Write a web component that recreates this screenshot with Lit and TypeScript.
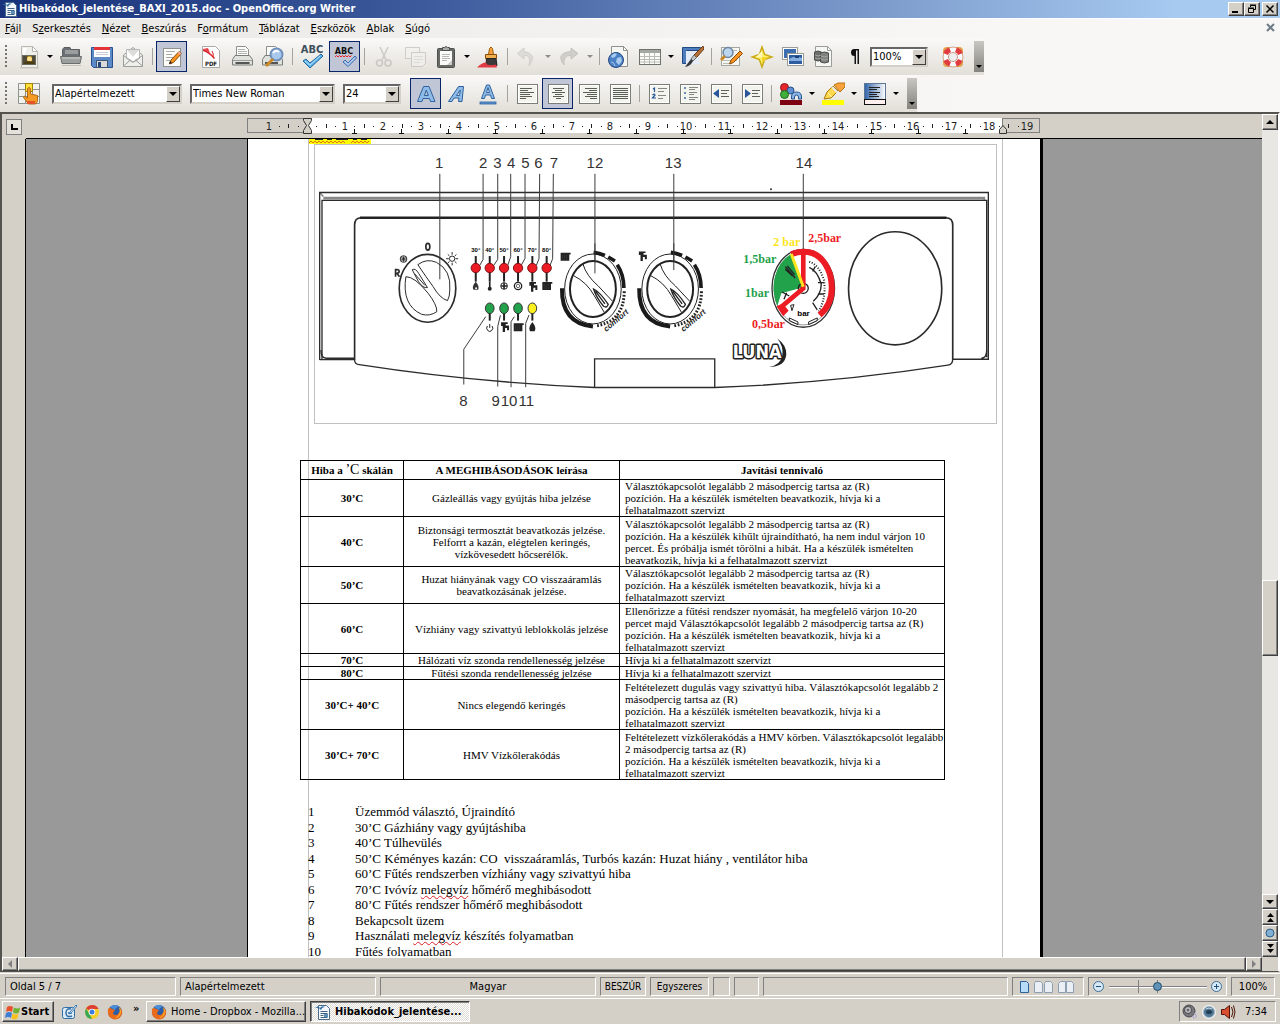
import { LitElement, html, svg, css, nothing } from "lit";
import { customElement, property } from "lit/decorators.js";
import { classMap } from "lit/directives/class-map.js";

const sheet = svg`<rect x="2.5" y="2.5" width="20" height="19" fill="#f3f4ee" stroke="#7b7e77"/><rect x="3.5" y="3.5" width="18" height="17" fill="none" stroke="#fff"/>`;

const lines = (rows: number[][], color = "#5a5e57") =>
  rows.map(([x1, x2, y]) => svg`<path d="M${x1} ${y}.5H${x2}" stroke=${color} fill="none"/>`);

const icons: Record<string, unknown> = {
  newDoc: svg`<path d="M4.500 1.500h11l5 5v16h-16z" fill="#eeeeea" stroke="#b9bab4"/><path d="M15.500 1.500v5h5z" fill="#fff" stroke="#b5b6b0"/><path d="M6 3h4l-3 8h-1z" fill="#fff"/><rect x="5.500" y="10.500" width="13" height="9" fill="#a07818" stroke="#6b695c"/><path d="M6 11h4v8H6zM15 11h3v8h-3z" fill="#4f4a38"/><circle cx="12.500" cy="14" r="2.500" fill="#ffe08a"/><path d="M7 18l4-2 7 1v2H7z" fill="#4a3c12"/><path d="M3 23h19" stroke="#c8c6bf"/>`,
  open: svg`<path d="M3.500 12V4.500L5 2.500h6l1 2h8.500V13" fill="#6c7076" stroke="#5a5d60"/><path d="M6 8h13M6 6h13" stroke="#c9ccc8"/><path d="M1.500 11.500h21l-1.500 7h-18z" fill="#9b9f9d" stroke="#6a6d6e"/><path d="M3 13h18" stroke="#d0d3d1"/><path d="M3 20h19v1H3z" fill="#c3c1bb"/>`,
  save: svg`<path d="M1.500 2.500h21v20h-19l-2-2z" fill="#5b8ac6" stroke="#2a4f8d"/><rect x="4" y="3" width="16" height="9" fill="#fff"/><rect x="4" y="2" width="16" height="3" fill="#e4343a"/><path d="M6 7.500h12M6 9.500h12" stroke="#c9ccd0"/><rect x="6.500" y="15.500" width="11" height="7" fill="#d9dbda" stroke="#3d5578"/><rect x="8" y="17" width="3" height="5" fill="#27467a"/>`,
  mail: svg`<path d="M2.500 10L12 2.500l9.500 7.500v11.500h-19z" fill="#efefec" stroke="#9d9f9c"/><path d="M5.500 4.500h13v9l-6.500 4-6.500-4z" fill="#fff" stroke="#b5b7b4"/><path d="M6 5h12l-6 7z" fill="#dcdddb"/><path d="M2.500 10.500L12 17l9.500-6.500M2.500 21l7-6M21.500 21l-7-6" fill="none" stroke="#9d9f9c"/>`,
  edit: svg`<rect x="3.500" y="3.500" width="17" height="18" fill="#fdfdfb" stroke="#8f918c"/>${lines([[6, 15, 6], [6, 12, 9], [6, 14, 12], [6, 10, 15]], "#a9aba6")}<path d="M19 6.500l2.500 2-8 9-4 1.500 1.500-4z" fill="#f7931e" stroke="#8a4b08"/><path d="M9 19l1-3 2 2z" fill="#222"/><path d="M19 6.500l2.500 2-1.500 1.500-2.500-2z" fill="#e9a8a0"/>`,
  pdf: svg`<path d="M3.500 1.500h13l4 4v17h-17z" fill="#fdfdfd" stroke="#aaaba8"/><path d="M4 4q6 2 12 9l-1 1Q10 8 4 6z" fill="#d8232a"/><path d="M4 4l5-1 2 5z" fill="#e64249"/><path d="M13 6q2 3 1 6" stroke="#d8232a" fill="none"/><text x="12" y="21" text-anchor="middle" font-size="6" font-weight="700" font-family="DejaVu Sans Condensed, sans-serif" fill="#222">PDF</text>`,
  print: svg`<path d="M6.500 11V1.500h9l3 3V11" fill="#fdfdfb" stroke="#8d8f8b"/>${lines([[8, 15, 4], [8, 17, 6], [8, 17, 8]], "#b3b5b1")}<path d="M5 10.500h14.500l3 4v5.500h-20v-5.500z" fill="#dfe1dd" stroke="#7a7c78"/><path d="M3 15.500h19" stroke="#9b9e99"/><path d="M5.500 18h14" stroke="#555" stroke-width="2"/>`,
  preview: svg`<path d="M5.500 12V1.500h9l3 3V12" fill="#fdfdfb" stroke="#8d8f8b"/><path d="M4 10.500h14.500l3 4v5.500h-20v-5.500z" fill="#dfe1dd" stroke="#7a7c78"/><path d="M4 18h13" stroke="#555" stroke-width="2"/><circle cx="15.500" cy="9.500" r="6" fill="#a8c8ec" stroke="#6f8fba" stroke-width="2"/><path d="M12 8q3-4 6-1" stroke="#fff" fill="none" stroke-width="2"/><path d="M12 14l-7 7" stroke="#c9892a" stroke-width="3"/>`,
  spell: svg`<text x="12" y="8" text-anchor="middle" font-size="11" font-weight="700" font-family="DejaVu Sans Condensed, sans-serif" fill="#3d4f5c">ABC</text><path d="M3 16l3-2 4 4L21 9l2 2-13 12z" fill="#5db2ea" stroke="#22689f"/><path d="M5 16l5 4L20 11" stroke="#b9e2fb" fill="none"/>`,
  autoSpell: svg`<text x="11" y="9" text-anchor="middle" font-size="9" font-weight="700" font-family="DejaVu Sans Condensed, sans-serif" fill="#111">ABC</text><path d="M2 12l1.500-1.500L5 12l1.500-1.500L8 12l1.500-1.500L11 12l1.500-1.500L14 12l1.500-1.500L17 12l1.500-1.500" stroke="#e22" fill="none"/><path d="M10 17l2-2 3 3 7-7 1.500 2L15 21.500z" fill="#a9c9ee" stroke="#3f69a8"/>`,
  cut: svg`<g opacity=".5" fill="none" stroke="#a9a8a4" stroke-width="1.500"><path d="M8 2l6 13M16 2l-6 13"/><ellipse cx="7.500" cy="18" rx="3" ry="3"/><ellipse cx="16" cy="18" rx="3" ry="3"/></g>`,
  copy: svg`<g opacity=".6" fill="#f2f1ee" stroke="#b7b6b1"><path d="M2.500 2.500h14v11h-14z"/><path d="M8.500 7.500h14v11l-3 3h-11z"/><path d="M11 11.500h9M11 14.500h9M11 17.500h6" stroke="#d2d1cc"/></g>`,
  paste: svg`<rect x="3.500" y="3.500" width="17" height="19" rx="1" fill="#686a66" stroke="#4e504d"/><rect x="6" y="6" width="12" height="14" fill="#fafaf8"/><path d="M8.500 5.500v-3h2q1.500-2 3 0h2v3z" fill="#a9aba6" stroke="#4e504d"/>${lines([[8, 16, 9], [8, 15, 11], [8, 16, 13], [8, 13, 15]], "#b5b7b2")}<path d="M13 20h5v-5z" fill="#c9cbc6"/>`,
  brush: svg`<path d="M12.500 9.500l1-6q1.500-3 3 0l1 6z" fill="#f5a13b" stroke="#9c5c0e"/><path d="M9.500 9.500h11v4h-11z" fill="#efb052" stroke="#8a4b08"/><path d="M10.500 13.500h9.500l1 7h-11z" fill="#3d3b3a" stroke="#222"/><path d="M1 22.500q5-5 9-5l1 2q5 1 9 0l1 3z" fill="#e03a42"/>`,
  undo: svg`<path d="M9 3L2.500 8.500 9 14v-3.500q8-1 5 10.500 9-12-5-14.500z" fill="#dedcd8" stroke="#d0cfca"/>`,
  redo: svg`<path d="M14 3l7 5.500-7 5.500v-3.500Q6 10 7 20-2 8 14 6.500z" fill="#cfceca" stroke="#c4c3be"/>`,
  globe: svg`<path d="M4.500 1.500h12l4 4v16h-16z" fill="#f6f6f3" stroke="#8f918c"/><path d="M16.500 1.500v4h4z" fill="#fff" stroke="#8f918c"/><circle cx="9" cy="15" r="7.500" fill="#4c80c4" stroke="#254a86"/><path d="M4 11q3-4 6-2l-2 3-3 1zM10 13l4-1 1 4-3 4-3-3z" fill="#a8cbee"/><path d="M4 17q3 0 4 4" stroke="#a8cbee" fill="none"/>`,
  table: svg`<rect x="1.500" y="4.500" width="21" height="15" fill="#fbfbf8" stroke="#6f726c"/><rect x="2" y="5" width="20" height="3" fill="#a4a8a2"/><path d="M2 11.500h20M2 14.500h20M2 17h20M6.500 8v11M11.500 8v11M16.500 8v11" stroke="#b9bbb6" fill="none"/>`,
  draw: svg`<path d="M2.500 2.500h18v3h-14v13h-4z" fill="#4d7dbd" stroke="#244a83"/><path d="M6 6h13v13H6z" fill="#e3ecf7"/><path d="M23 1l-9 9 2.500 2.500L24 4z" fill="#b4723a" stroke="#6e3c12"/><path d="M14 10l2.500 2.500L13 16l-2-2z" fill="#c5c8c6" stroke="#666"/><path d="M11 14l2 2q-2 5-8 6 3-4 6-8z" fill="#34383c"/>`,
  find: svg`<rect x="2.500" y="2.500" width="18" height="18" fill="#f5f5f2" stroke="#a4a69f"/>${lines([[4, 18, 5], [4, 18, 15], [4, 10, 18]], "#b9bbb5")}<circle cx="9" cy="7.500" r="5" fill="#bcd5ee" stroke="#6e87a5" stroke-width="1.500"/><path d="M6 11l-4 4" stroke="#c9892a" stroke-width="3"/><path d="M21 6l2.500 2.500-9 9-4 1.500 1.500-4z" fill="#f7931e" stroke="#8a4b08"/>`,
  nav: svg`<path d="M12 2l2.600 7.400L22 12l-7.400 2.600L12 22l-2.600-7.400L2 12l7.400-2.600z" fill="#fdf06a" stroke="#c9a813" stroke-width="1.500"/><path d="M12 6v6H6z" fill="#fff8b8"/><path d="M12 18v-6h6z" fill="#f4d42a"/>`,
  gallery: svg`<rect x="1.500" y="2.500" width="15" height="12" fill="#fff" stroke="#9a9c97"/><rect x="3" y="4" width="12" height="9" fill="#3c6db0"/><rect x="6.500" y="8.500" width="16" height="12" fill="#fff" stroke="#9a9c97"/><rect x="8" y="10" width="13" height="9" fill="#2d5c9f"/><path d="M8 14q6-4 13-1v3H8z" fill="#83aedd"/><path d="M14 11h4v2h-4z" fill="#1c3f75"/>`,
  sources: svg`<path d="M3.500 1.500h12l4 4v16h-16z" fill="#f6f6f3" stroke="#9a9c97"/><path d="M15.500 1.500v4h4z" fill="#fff" stroke="#9a9c97"/><path d="M2.500 7q3.500-2 7 0v8q-3.500 2-7 0z" fill="#6d6f6c" stroke="#4c4e4c"/><path d="M8.500 8q4-2 8 0v9q-4 2-8 0z" fill="#7f817e" stroke="#4c4e4c"/><path d="M3 10q3 2 6 0M3 13q3 2 6 0M9 11q3.500 2 7 0M9 14q3.500 2 7 0" stroke="#a5a7a4" fill="none"/>`,
  pilcrow: svg`<path d="M11 4h5v15h-1.500V5.500H13V19h-1.500v-8q-3.500 0-3.500-3.500T11 4z" fill="#111"/>`,
  help: svg`<rect x="2" y="2" width="20" height="20" rx="4" fill="#e2a24a"/><circle cx="12" cy="12" r="10" fill="#fbfbfb" stroke="#d9a790"/><g fill="none" stroke="#e23b3f" stroke-width="5"><path d="M4.600 9A8 8 0 0 1 9 4.600M15 4.600A8 8 0 0 1 19.400 9M19.400 15a8 8 0 0 1-4.400 4.400M9 19.400A8 8 0 0 1 4.600 15"/></g><circle cx="12" cy="12" r="4.500" fill="#efeeec" stroke="#c79a90"/>`,
  styles: svg`<g fill="#f1f1ee" stroke="#8f928c"><path d="M1.500 1.500h7v6h-7zM8.500 1.500h7v6h-7zM15.500 1.500h7v6h-7zM1.500 7.500h7v7h-7zM15.500 7.500h7v7h-7zM1.500 14.500h7v7h-7zM8.500 14.500h7v7h-7zM15.500 14.500h7v7h-7z"/></g><rect x="8.500" y="1.500" width="7" height="8" fill="#ffdf3a" stroke="#a48508"/><path d="M10.500 16V6.500q1.500-2 3 0V12l7 1.500v6l-2 2.500h-7l-5-6.500 1-1.500z" fill="#f59a23" stroke="#b06a16"/><path d="M10 19h8v3h-8z" fill="#e3532a"/>`,
  bold: svg`<path d="M3.500 19.500L9.500 4.500h5.500l6 15h-4.500l-1-3H9l-1 3zM10.300 13.500h4L12.300 8z" fill="#8fbbe6" fill-rule="evenodd" stroke="#2f62a0"/>`,
  italic: svg`<path d="M3.500 19.500L13.500 4.500h5l-1.500 15h-3.500l.5-3.500h-5l-2 3.500zM11.500 13.500h3l.8-5.500z" fill="#8fbbe6" fill-rule="evenodd" stroke="#2f62a0"/>`,
  underline: svg`<path d="M5.500 16.500l5-13.500h3l5 13.500h-3l-1-3.500h-5l-1 3.500zM10.500 10.500h3l-1.500-5z" fill="#8fbbe6" fill-rule="evenodd" stroke="#2f62a0"/><rect x="4" y="20" width="16" height="2" fill="#5c95d6" stroke="#2f62a0" stroke-width=".8"/>`,
  left: svg`${sheet}${lines([[5, 17, 6], [5, 13, 8], [5, 19, 10], [5, 15, 12], [5, 17, 14], [5, 11, 16]])}`,
  center: svg`${sheet}${lines([[7, 18, 6], [9, 16, 8], [6, 19, 10], [9, 16, 12], [7, 18, 14], [10, 15, 16]])}`,
  right: svg`${sheet}${lines([[8, 20, 6], [12, 20, 8], [6, 20, 10], [10, 20, 12], [8, 20, 14], [13, 20, 16]])}`,
  justify: svg`${sheet}${lines([[5, 20, 6], [5, 20, 8], [5, 20, 10], [5, 20, 12], [5, 20, 14], [5, 20, 16]])}`,
  numbers: svg`${sheet}<path d="M6 7l1.500-1V10M5.500 13q2-2 2.500 0l-2.500 3H9" stroke="#2a5799" fill="none" stroke-width="1.200"/>${lines([[11, 20, 6], [11, 17, 9], [11, 19, 13], [11, 16, 16]], "#858882")}`,
  bullets: svg`${sheet}<path d="M6 6h2M6 11h2M6 16h2" stroke="#6f8fba" stroke-width="2"/>${lines([[11, 20, 5], [11, 17, 7], [11, 19, 10], [11, 16, 12], [11, 20, 15], [11, 17, 17]], "#858882")}`,
  outdent: svg`${sheet}<path d="M10 7v9l-6-4.500z" fill="#2a5799"/>${lines([[12, 20, 8], [12, 18, 11], [12, 20, 14]], "#5d605b")}`,
  indent: svg`${sheet}<path d="M5 7v9l6-4.500z" fill="#2a5799"/>${lines([[12, 20, 8], [12, 18, 11], [12, 20, 14]], "#5d605b")}`,
  fontColor: svg`<circle cx="5.500" cy="5.500" r="4" fill="#e5262c" stroke="#8d1014"/><circle cx="11.500" cy="8.500" r="3.500" fill="#5f91d2" stroke="#254a86"/><circle cx="5.500" cy="12.500" r="4" fill="#3fae3b" stroke="#1c6a1a"/><path d="M12.500 17v-2q0-5 5-5t5 5v2h-3v-2q0-2-2-2t-2 2v2z" fill="#8db7e4" stroke="#215390"/><rect x="1" y="18" width="22" height="5" fill="#7c0010"/>`,
  highlight: svg`<path d="M3 17l3-7 6-6 5 5-7 7z" fill="#ffd94d" stroke="#a8790a"/><path d="M13 3l4-2h7v4l-5 5z" fill="#f5a33a" stroke="#b87018"/><path d="M11 5l6 6" stroke="#e9e9e9" stroke-width="2"/><path d="M7 11l4 4" stroke="#fff3a8"/><rect x="1" y="18" width="22" height="5" fill="#ff0"/>`,
  background: svg`<defs><linearGradient id="bg"><stop offset="0" stop-color="#2f62a8"/><stop offset="1" stop-color="#fff"/></linearGradient></defs><rect x="1.500" y="1.500" width="21" height="16" fill="url(#bg)" stroke="#5f7797"/>${lines([[6, 17, 5], [6, 14, 7], [6, 17, 10], [6, 14, 12], [6, 16, 14]], "#222")}<rect x="1.500" y="17.500" width="21" height="5" fill="#fff0f0" stroke="#111"/>`,
};

const small: Record<string, unknown> = {
  writer: svg`<path d="M3.500 1.500h8l3 3v11h-11z" fill="#f4f8fc" stroke="#4b6b8d"/><path d="M0 4q3-3 5 0 2-3 5-1-3 0-4 3Q4 3 0 4z" fill="#2d6a9e"/><path d="M5.500 7.500h7M5.500 9.500h7M5.500 11.500h3M5.500 13.500h7" stroke="#3e6384"/><rect x="9" y="10" width="4" height="3" fill="#5f8fb8"/>`,
  windows: svg`<path d="M2 3q3-2 6 0l-1 5q-3-2-6 0z" fill="#e8502a"/><path d="M9 3.500q3 2 6 0l-1 5q-3 2-6 0z" fill="#6fb12c"/><path d="M1 9q3-2 6 0l-1 5q-3-2-6 0z" fill="#3d7fd6"/><path d="M7.500 9.500q3 2 6 0l-1 5q-3 2-6 0z" fill="#f8c11c"/>`,
  desktop: svg`<rect x="1.500" y="3.500" width="12" height="11" rx="2" fill="#dceaf6" stroke="#2f6ea8"/><path d="M10 5q-5-1-5 4t6 3M7 9h4" stroke="#2f6ea8" fill="none" stroke-width="1.500"/><path d="M15 1l-6 7-1 2 2-1 6-7z" fill="#fff" stroke="#3778b2"/>`,
  chrome: svg`<circle cx="8" cy="8" r="7" fill="#f9cf27"/><path d="M8 8L2 4.500A7 7 0 0 1 14.500 5H8z" fill="#dd4032"/><path d="M2 4.500L6 11l2 4A7 7 0 0 1 2 4.500z" fill="#36a853"/><circle cx="8" cy="8" r="3.300" fill="#fff"/><circle cx="8" cy="8" r="2.500" fill="#3f7de0"/>`,
  firefox: svg`<circle cx="8" cy="8" r="7" fill="#2b5da8"/><path d="M3 3Q8-1 12 3q-3 0-4 3z" fill="#4b8fd6"/><path d="M1 5q2-2 4 0l3 1q-2 2-2 4 3 2 5 0 3-3 1-7 4 3 3 7-2 6-8 5.500Q0 14 1 5z" fill="#ea6a1c"/><path d="M12 3q3 3 1 8-2 3-5 3 7-3 4-11z" fill="#fbc02d"/>`,
  speaker: svg`<circle cx="7" cy="7" r="6" fill="#77777b" stroke="#4a4a4e"/><circle cx="6" cy="6" r="3.500" fill="#c6c6cc" stroke="#444"/><circle cx="6" cy="6" r="1.500" fill="#666"/><path d="M12 9q3 1 2 5M10 12q2 0 2 3" stroke="#a59dda" fill="none"/>`,
  orb: svg`<circle cx="8" cy="8" r="7" fill="#f1f3f5"/><circle cx="8" cy="8" r="5.500" fill="#517792" stroke="#9fb4c2"/><ellipse cx="8" cy="8" rx="3" ry="2" fill="#223f57"/><path d="M5 5q3-2 6 0" stroke="#c8dae6" fill="none"/>`,
  sound: svg`<path d="M1.500 5.500h3l5-4v13l-5-4h-3z" fill="#d8502f" stroke="#4e1408"/><path d="M11.500 3q3 5 0 10M13.500 1.500q3 6.500 0 13" stroke="#4e1408" fill="none"/>`,
};

const knob2 = svg`
  <ellipse cx="880" cy="477" rx="85" ry="105" fill="none" stroke="#222" stroke-width="3"/>
  <ellipse cx="880" cy="477" rx="69" ry="84" fill="#fff" stroke="#222" stroke-width="6"/>
  <path d="M787 475q-2 105 93 115" fill="none" stroke="#1a1a1a" stroke-width="12"/>
  <path d="M882 367q18 2 34 9M926 381l20 12M953 404q20 30 20 70" fill="none" stroke="#1a1a1a" stroke-width="11"/>
  <path d="M974 484q0 90-85 104" fill="none" stroke="#222" stroke-width="9" stroke-dasharray="5 5"/>
  <path d="M822 437q40 20 62 60l30 50M850 402q10 35 46 66l42 45" fill="none" stroke="#222" stroke-width="3"/>
  <path d="M882 477q18 8 44 46-4 12-14 6-22-26-30-52zM888 484l28 38" fill="none" stroke="#222" stroke-width="4"/>
  <text x="920" y="606" class="comfort" transform="rotate(-40 920 606)">comfort</text>`;

const tap = (x: number, y: number) => svg`<path d="M${x} ${y}h20v5h-6v5h10v14h-6v-7h-6v12h-7v-18h-5z" fill="#222"/>`;
const radiator = (x: number, y: number) => svg`<path d="M${x} ${y}h30v5h-4v19h-26z" fill="#222"/><path d="M${x + 6} ${y + 5}v16m6-16v16m6-16v16" stroke="#555" stroke-width="1"/>`;

const lamps = [528, 570, 613, 655, 698, 741];

const panelDrawing = svg`
  <g fill="none" stroke="#2b2b2b" stroke-width="3">
    <path d="M70 202H2056v8M59 187l11 12M70 206H2056" stroke="#888" stroke-width="5"/>
    <path d="M59 690V187H2068V690M66 690V211H2063V682" stroke-width="4"/>
    <path d="M63 660q0 24 16 25H164M59 689H164M1962 688H2068M2063 660q0 24-16 25" stroke-width="4"/>
    <path d="M164 690V285q0-22 20-22H1940q21 0 21 22V690" stroke-width="5"/>
    <path d="M180 263H1942" stroke-width="8" stroke="#222"/>
    <path d="M164 690q0 13 14 14Q520 757 885 773H1246Q1600 760 1946 706q15-2 15-18" stroke-width="4"/>
    <path d="M885 773V687H1246V773" stroke-width="4"/>
    <ellipse cx="1788" cy="475" rx="140" ry="170" stroke-width="5"/>
    <ellipse cx="383" cy="475" rx="85" ry="102" stroke-width="5"/>
    <path d="M354 404Q380 384 410 397 455 420 450 480 450 500 443 512 420 505 400 470 378 440 354 404z"/>
    <path d="M318 440Q345 440 385 490 412 525 411 545 390 560 365 553 305 525 318 440z"/>
    <path d="M337 419q10-6 20 12l26 42q-14 2-27-18zM345 432l30 34"/>
    <ellipse cx="384" cy="350" rx="6" ry="10" stroke-width="5"/>
    <circle cx="457" cy="386" r="8"/><path d="M457 366v8M457 398v8M439 386h8M467 386h8M444 373l5 5M465 394l5 5M470 373l-5 5M444 399l5-5"/>
    <circle cx="311" cy="387" r="10"/><path d="M303 387h16M311 379v16M304 380l14 14M318 380l-14 14"/>
    <path d="M287 440v-21h5q6 1 6 5 0 6-7 6l8 10" stroke-width="5"/>
  </g>
  <g fill="none" stroke="#3a3a3a" stroke-width="3">
    <path d="M420 131V448M550 131V388l-10 18M594 131V388l-12 18M633 131V380l-9 26M676 131V385l-11 20M720 131l-2 255-8 20M761 131l-2 255-8 20M886 131V430M1123 131V420M1512 131V360"/>
    <path d="M492 764V658l66-98M594 770V590l8-34M634 772V575l10-15M678 772V580l10-25"/>
  </g>
  ${lamps.map((x, i) => svg`<path d="M${x} 378V455" stroke="#222" stroke-width="6"/><circle cx=${x} cy="414" r="14" fill="#ed1c24" stroke="#7c1015" stroke-width="3"/><text x=${x} y="367" class="tick">${3 + i}0°</text>`)}
  ${[[570, "#22a24a"], [613, "#22a24a"], [655, "#22a24a"], [698, "#fdf01e"]].map(([x, c]) => svg`<path d="M${x} 535V572" stroke="#222" stroke-width="6"/><ellipse cx=${x} cy="535" rx="13" ry="16" fill=${c} stroke="#333" stroke-width="3"/>`)}
  <path d="M528 455q12 14 7 24h-14q-6-10 7-24z" fill="#333"/><circle cx="529" cy="475" r="3" fill="#fff"/>
  <path d="M570 455v20" stroke="#222" stroke-width="5"/><circle cx="570" cy="476" r="6" fill="#222"/>
  <circle cx="613" cy="468" r="10" fill="none" stroke="#222" stroke-width="3"/><path d="M604 468h18M613 459v18" stroke="#222" stroke-width="5"/>
  <circle cx="655" cy="468" r="11" fill="none" stroke="#222" stroke-width="4"/><circle cx="655" cy="468" r="5" fill="none" stroke="#222" stroke-width="2"/>
  ${tap(689, 456)}${radiator(728, 456)}${tap(604, 577)}${radiator(642, 580)}${radiator(783, 368)}${tap(1018, 364)}
  <path d="M563 588a9 10 0 1 0 14 0M570 582v12" stroke="#222" stroke-width="3" fill="none"/>
  <path d="M698 576q14 18 7 28h-14q-7-10 7-28z" fill="#222"/>
  ${knob2}<g transform="translate(232 0)">${knob2}</g>
  <path d="M886 340V430M1123 340V420" stroke="#3a3a3a" stroke-width="3"/>
  <ellipse cx="1512" cy="475" rx="94" ry="117" fill="#fff" stroke="#333" stroke-width="4"/>
  <ellipse cx="1512" cy="475" rx="88" ry="110" fill="none" stroke="#666" stroke-width="2"/>
  <path d="M1512 472L1475 372A90 112 0 0 0 1434 528L1446 490z" fill="#22a24a"/>
  <g fill="none" stroke="#222" stroke-width="4"><path d="M1530 412q24 10 36 50 0 30-24 52M1540 424l8-14M1556 458h18M1556 492h18M1540 518l14 22M1448 486l22 12M1462 488l-8 20"/><path d="M1530 395q30 10 44 55 8 54-16 94" stroke-width="6" stroke-dasharray="3 5"/><path d="M1458 410l30 34M1464 408l22 26M1458 418l22 20"/><circle cx="1512" cy="475" r="15"/><path d="M1470 564l26 12v8l-26-12zM1554 564l-26 12v8l26-12z" stroke-width="3"/><path d="M1474 526l4 16 6-18z" stroke-width="3"/></g>
  <path d="M1476 372q85-28 116 60 20 80-31 123" fill="none" stroke="#ed1c24" stroke-width="18"/>
  <path d="M1512 362V475L1442 534" fill="none" stroke="#ed1c24" stroke-width="14"/>
  <path d="M1436 530l16 24 12-12-14-18z" fill="#ed1c24" stroke="#ed1c24" stroke-width="6"/>
  <path d="M1476 372L1512 470" stroke="#fbe51c" stroke-width="9"/>
  <g class="num">
    ${([[418, 115, "1"], [550, 115, "2"], [593, 115, "3"], [634, 115, "4"], [677, 115, "5"], [716, 115, "6"], [763, 115, "7"], [886, 115, "12"], [1121, 115, "13"], [1514, 115, "14"], [491, 829, "8"], [588, 829, "9"], [628, 829, "10"], [680, 829, "11"]] as [number, number, string][]).map(([x, y, t]) => svg`<text x=${x} y=${y}>${t}</text>`)}
  </g>
  <g class="bar">
    <text x="1422" y="348" fill="#fbe51c">2 bar</text><text x="1527" y="336" fill="#ed1c24">2,5bar</text>
    <text x="1332" y="398" fill="#22a24a">1,5bar</text><text x="1337" y="502" fill="#22a24a">1bar</text>
    <text x="1358" y="594" fill="#ed1c24">0,5bar</text>
  </g>
  <text x="1494" y="559" class="unit">bar</text>
  <path d="M1434 626q28 20 27 48-4 38-52 37 34-4 40-34 4-28-15-51z" fill="#222"/>
  <text x="1300" y="684" class="luna">LUNA</text>
  <circle cx="1415" cy="177" r="3" fill="#333"/>`;

const CM = 37.9;
const rulerDrawing = () => {
  const marks = [];
  for (let n = -1; n <= 19; n++) {
    const x = Math.round(60 + n * CM);
    if (n !== 0) marks.push(svg`<text x=${x} y="12">${Math.abs(n)}</text>`);
    for (const q of [0.25, 0.5, 0.75]) {
      const px = Math.round(60 + (n + q) * CM);
      if (px < 790 && px > 2) marks.push(q === 0.5 ? svg`<rect x=${px} y="6" width="1" height="4"/>` : svg`<rect x=${px} y="8" width="1" height="1"/>`);
    }
  }
  const tabs = [];
  for (let x = 107; x < 750; x += 47) tabs.push(svg`<path d="M${x - 2} 15.500h5M${x}.500 11v4" stroke="#111" fill="none"/>`);
  return svg`
    <rect x="0.500" y=".500" width="59" height="14" fill="#d4d0c8" stroke="#808080"/>
    <rect x="60" y="0" width="696" height="15" fill="#fff"/>
    <rect x="755.500" y=".500" width="37" height="14" fill="#d4d0c8" stroke="#808080"/>
    <g class="scale">${marks}</g>${tabs}
    <path d="M56.500 .500h8v2l-3 5 3 5v3h-8v-3l3-5-3-5z" fill="#d4d0c8" stroke="#333"/>
    <path d="M752.500 15.500v-4l3.500-4 3.500 4v4z" fill="#d4d0c8" stroke="#333"/>`;
};

const R = "pozíción. Ha a készülék ismételten beavatkozik, hívja ki a";
const S = "felhatalmazott szervizt";
const V = "Választókapcsolót legalább 2 másodpercig tartsa az (R)";

const faults: { code: string; cause: string[]; fix: string[] }[] = [
  { code: "30’C", cause: ["Gázleállás vagy gyújtás hiba jelzése"], fix: [V, R, S] },
  { code: "40’C", cause: ["Biztonsági termosztát beavatkozás jelzése.", "Felforrt a kazán, elégtelen keringés,", "vízkövesedett hőcserélők."], fix: [V, "pozíción. Ha a készülék kihűlt újraindítható, ha nem indul várjon 10", "percet. És próbálja ismét törölni a hibát. Ha a készülék ismételten", "beavatkozik, hívja ki a felhatalmazott szervizt"] },
  { code: "50’C", cause: ["Huzat hiányának vagy CO visszaáramlás", "beavatkozásának jelzése."], fix: [V, R, S] },
  { code: "60’C", cause: ["Vízhiány vagy szivattyú leblokkolás jelzése"], fix: ["Ellenőrizze a fűtési rendszer nyomását, ha megfelelő várjon 10-20", "percet majd Választókapcsolót legalább 2 másodpercig tartsa az (R)", R, S] },
  { code: "70’C", cause: ["Hálózati víz szonda rendellenesség jelzése"], fix: ["Hívja ki a felhatalmazott szervizt"] },
  { code: "80’C", cause: ["Fűtési szonda rendellenesség jelzése"], fix: ["Hívja ki a felhatalmazott szervizt"] },
  { code: "30’C+ 40’C", cause: ["Nincs elegendő keringés"], fix: ["Feltételezett dugulás vagy szivattyú hiba. Választókapcsolót legalább 2", "másodpercig tartsa az (R)", R, S] },
  { code: "30’C+ 70’C", cause: ["HMV Vízkőlerakódás"], fix: ["Feltételezett vízkőlerakódás a HMV körben. Választókapcsolót legalább", "2 másodpercig tartsa az (R)", R, S] },
];

const bad = (t: string) => html`<span class="bad">${t}</span>`;
const legend: unknown[] = [
  "Üzemmód választó, Újraindító",
  "30’C Gázhiány vagy gyújtáshiba",
  "40’C Túlhevülés",
  "50’C Kéményes kazán: CO  visszaáramlás, Turbós kazán: Huzat hiány , ventilátor hiba",
  "60’C Fűtés rendszerben vízhiány vagy szivattyú hiba",
  html`70’C Ivóvíz ${bad("melegvíz")} hőmérő meghibásodott`,
  "80’C Fűtés rendszer hőmérő meghibásodott",
  "Bekapcsolt üzem",
  html`Használati ${bad("melegvíz")} készítés folyamatban`,
  "Fűtés folyamatban",
];

const joined = (parts: string[]) => parts.map((p, i) => (i ? html`<br />${p}` : p));

@customElement("doc-page")
class DocPage extends LitElement {
  static styles = css`
    :host { display: block; flex: none; min-height: 100%; box-sizing: border-box; width: 796px; background: #fff; border-left: 1px solid #000; border-right: 3px solid #000; font-family: "Liberation Serif", "Times New Roman", serif; color: #000; }
    .margins { box-sizing: border-box; margin: 0 37px 0 60px; border-left: 1px solid #c0c0c0; border-right: 1px solid #c0c0c0; }
    .clipped { display: block; width: 62px; height: 5px; background: #ff0; }
    .figure { display: block; box-sizing: border-box; margin: 0 5px 36px; border: 1px solid #c0c0c0; }
    .figure svg { display: block; width: 100%; height: 278px; }
    .num text { font: 45px "Liberation Sans Narrow", "Liberation Sans", sans-serif; text-anchor: middle; fill: #333; }
    .bar text { font: bold 36px "Liberation Serif", serif; }
    .tick { font: bold 18px "Liberation Sans", sans-serif; text-anchor: middle; }
    .comfort { font: italic bold 24px "Liberation Sans", sans-serif; fill: #222; }
    .unit { font: bold 24px "Liberation Sans", sans-serif; }
    .luna { font: bold 54px "DejaVu Sans Condensed", sans-serif; fill: #fff; stroke: #222; stroke-width: 9; stroke-linejoin: round; paint-order: stroke; }
    table { border-collapse: collapse; table-layout: fixed; width: 645px; margin-left: -9px; font-size: 11px; line-height: 12px; white-space: nowrap; }
    th, td { border: 1px solid #000; padding: 0 5px; text-align: center; vertical-align: middle; }
    th { font-weight: bold; }
    thead tr { height: 19px; }
    thead th { padding: 0; line-height: 18px; }
    .deg { font-size: 14px; font-weight: normal; }
    .fix { text-align: left; }
    .tall { height: 50px; }
    .c1 { width: 103px; }
    .c2 { width: 216px; }
    ol { list-style: none; margin: 24px 0 0; padding: 0; display: grid; grid-auto-rows: 1fr; height: 155px; font-size: 13px; line-height: 15px; }
    li { display: grid; grid-template-columns: 47px 1fr; margin-left: -1px; white-space: pre; }
    .bad { text-decoration: underline wavy #d8232a 1px; text-underline-offset: 1px; text-decoration-skip-ink: none; }
  `;
  render() {
    return html`<div class="margins">
      <svg class="clipped" viewBox="0 0 62 5" aria-hidden="true"><path d="M6 .5h8M18 .5h5M27 .5h12M44 .5h4M52 .5h6" stroke="#222" /><path d="M0 4l2-2 2 2 2-2 2 2 2-2 2 2 2-2 2 2 2-2 2 2 2-2 2 2 2-2 2 2 2-2 2 2 2-2 2 2M42 4l2-2 2 2 2-2 2 2 2-2 2 2 2-2 2 2 2-2" fill="none" stroke="#e0701a" /></svg>
      <div class="figure"><svg viewBox="45 45 2046 834" role="img" aria-label="LUNA">${panelDrawing}</svg></div>
      <table>
        <colgroup><col class="c1" /><col class="c2" /><col /></colgroup>
        <thead><tr><th scope="col">Hiba a <span class="deg">’C</span> skálán</th><th scope="col">A MEGHIBÁSODÁSOK leírása</th><th scope="col">Javítási tennivaló</th></tr></thead>
        <tbody>${faults.map((f) => html`<tr class=${classMap({ tall: f.fix.length === 4 })}><th scope="row">${f.code}</th><td>${joined(f.cause)}</td><td class="fix">${joined(f.fix)}</td></tr>`)}</tbody>
      </table>
      <ol>${legend.map((t, i) => html`<li><span>${i + 1}</span><span>${t}</span></li>`)}</ol>
    </div>`;
  }
}

@customElement("tool-button")
class ToolButton extends LitElement {
  @property() icon = "";
  @property() label = "";
  @property({ type: Boolean }) pressed = false;
  static styles = css`
    :host { display: block; flex: none; }
    button { display: grid; place-items: center; width: 31px; height: 31px; padding: 0; border: 1px solid transparent; background: none; }
    .on { background: #c1c6d6; border-color: #0a246a; }
    svg { display: block; width: 24px; height: 24px; }
  `;
  render() {
    return html`<button class=${classMap({ on: this.pressed })} aria-label=${this.label} aria-pressed=${this.pressed ? "true" : "false"}><svg viewBox="0 0 24 24">${icons[this.icon]}</svg></button>`;
  }
}

const tool = (icon: string, label: string, pressed = false) => html`<tool-button icon=${icon} label=${label} ?pressed=${pressed}></tool-button>`;
const drop = (label: string, dim = false) => html`<button class="drop ${dim ? "dim" : ""}" aria-label=${label}></button>`;
const sep = html`<i class="sep"></i>`;
const combo = (label: string, cls: string, value: string) => html`<label class="combo ${cls}"><select aria-label=${label}><option>${value}</option></select><span class="arrow"></span></label>`;
const glyph = (name: string) => html`<svg class="glyph" viewBox="0 0 16 16" aria-hidden="true">${small[name]}</svg>`;

@customElement("app-root")
class AppRoot extends LitElement {
  static styles = css`
    :host { display: flex; flex-direction: column; height: 100vh; overflow: hidden; background: #d4d0c8; color: #000; font: 11px/14px "DejaVu Sans Condensed", Tahoma, sans-serif; }
    button, select { font: inherit; color: inherit; }
    button { margin: 0; }
    .glyph { display: block; flex: none; width: 16px; height: 16px; }
    .raised { box-sizing: border-box; background: #d4d0c8; border: 1px solid; border-color: #fff #404040 #404040 #fff; box-shadow: inset -1px -1px #808080; padding: 0; display: grid; place-items: center; }
    .title { display: flex; align-items: center; height: 18px; padding: 0 2px; background: linear-gradient(90deg, #17317a, #3c5a9c 33%, #7896c8 66%, #a6caf0 92%); color: #fff; }
    .title h1 { flex: 1; margin: 0 0 0 1px; font-size: 11px; line-height: 18px; font-weight: bold; white-space: nowrap; }
    .title .raised { width: 16px; height: 14px; color: #000; }
    .title .close { margin-left: 2px; }
    .chrome { background: linear-gradient(90deg, #eae8e4, #f3f2f0 50%, #f8f7f6 80%); border-top: 1px solid #fff; }
    .menu { display: flex; align-items: center; height: 19px; padding: 0 4px; gap: 9px; }
    .menu button { border: 0; background: none; padding: 0 1px; line-height: 16px; }
    .menu .shut { margin-left: auto; padding: 0 1px; }
    .bar { display: flex; align-items: center; width: max-content; height: 37px; background: linear-gradient(#faf9f8, #e2dfd8); box-sizing: border-box; }
    .grip { width: 2px; height: 24px; margin: 0 6px 0 5px; background: repeating-linear-gradient(#77756f 0 2px, transparent 2px 4px); }
    .sep { flex: none; width: 1px; height: 17px; margin: 0 3px 0 4px; background: #a5a39d; }
    .gap2 { width: 2px; } .gap6 { width: 6px; } .gap8 { width: 8px; } .gap9 { width: 9px; }
    .drop { width: 11px; height: 31px; padding: 0; border: 0; background: none; display: grid; place-items: center; }
    .drop::before, .arrow::before { content: ""; border: 3px solid transparent; border-top-color: #000; border-bottom: 0; }
    .dim::before { border-top-color: #8e8d89; }
    .combo { box-sizing: border-box; display: flex; height: 20px; background: #fff; border: 2px solid; border-color: #666 #d4d0c8 #d4d0c8 #666; }
    .combo select { flex: 1; min-width: 0; border: 0; padding: 0 0 0 1px; background: none; appearance: none; outline: 0; }
    .arrow { width: 14px; box-sizing: border-box; display: grid; place-items: center; background: #d4d0c8; border: 1px solid; border-color: #fff #404040 #404040 #fff; pointer-events: none; }
    .arrow::before { border-width: 4px 4px 0; }
    .w57 { width: 58px; } .w130 { width: 130px; } .w145 { width: 145px; }
    .more { width: 10px; height: 31px; padding: 0 0 4px; border: 0; background: linear-gradient(#c9c7c2, #85837e); display: flex; align-items: flex-end; justify-content: center; }
    .more::before { content: ""; border: 3px solid transparent; border-top-color: #000; border-bottom: 0; }
    .work { flex: 1; min-height: 0; display: grid; grid-template-columns: 24px 1fr 16px; grid-template-rows: 25px 1fr 14px; border: 2px solid; border-color: #55534e #fff #55534e #55534e; border-bottom-width: 1px; }
    .corner { display: grid; place-items: center; }
    .corner svg { width: 16px; height: 16px; }
    .ruler { display: flex; justify-content: center; align-items: center; padding-right: 2px; border-bottom: 1px solid #000; }
    .ruler svg { flex: none; width: 793px; height: 17px; }
    .scale { fill: #222; text-anchor: middle; font: 11px "DejaVu Sans Condensed", sans-serif; }
    .vruler { border-right: 1px solid #000; }
    .canvas { min-height: 0; overflow: hidden; display: flex; justify-content: center; align-items: flex-start; padding-left: 2px; background: #999; }
    .vscroll { grid-column: 3; grid-row: 1 / 3; display: grid; grid-template-rows: 16px 450fr 76px 238fr 15px 16px 16px 16px; background: #e9e7e3; min-height: 0; }
    .hscroll { grid-column: 1 / 3; display: grid; grid-template-columns: 16px 1fr 16px; }
    .status { display: flex; gap: 4px; padding: 3px 5px 2px; border-top: 1px solid #fff; margin-top: 1px; }
    .cell { box-sizing: border-box; height: 19px; border: 1px solid; border-color: #808080 #fff #fff #808080; padding: 0 4px; line-height: 18px; white-space: nowrap; text-align: center; }
    .s1 { width: 171px; text-align: left; } .s2 { width: 196px; text-align: left; } .s3 { width: 216px; } .s4 { width: 46px; font-size: 10px; padding: 0; } .s5 { width: 59px; font-size: 10px; padding: 0; } .s6 { width: 17px; } .s7 { width: 25px; } .s8 { flex: 1; }
    .s9 { width: 72px; display: flex; align-items: center; justify-content: center; }
    .s9 svg { width: 60px; height: 14px; }
    .s10 { width: 139px; display: flex; align-items: center; justify-content: space-between; }
    .s11 { width: 44px; padding: 0; }
    .round { width: 11px; height: 11px; padding: 0; border: 0; background: none; display: block; }
    .round svg { display: block; width: 11px; height: 11px; }
    .zoom { appearance: none; width: 98px; height: 13px; margin: 0; background: linear-gradient(#808080, #808080) 29px 0 / 1px 13px no-repeat, linear-gradient(#808080, #808080) 50% 0 / 1px 13px no-repeat, linear-gradient(#808080 1px, #fff 1px) 0 6px / 100% 2px no-repeat; }
    .zoom::-webkit-slider-thumb { appearance: none; width: 9px; height: 9px; border-radius: 50%; border: 1px solid #234a68; background: #5f93b8; }
    .task { display: flex; align-items: center; height: 25px; padding: 0 4px 0 2px; border-top: 1px solid #fff; }
    .task .raised { display: flex; align-items: center; height: 21px; gap: 4px; white-space: nowrap; }
    .task .start { width: 52px; padding: 0 2px; gap: 0; }
    .start, .current { font-weight: bold; }
    .quick { display: flex; align-items: center; gap: 7px; margin: 0 10px 0 7px; }
    .quick a { display: block; }
    .chev { width: 12px; font-weight: bold; padding: 0; border: 0; background: none; margin: 0 1px 6px 0; text-align: left; }
    .task .tab { width: 160px; padding: 0 4px; margin-right: 4px; }
    .task .current { border-color: #404040 #fff #fff #404040; box-shadow: inset 1px 1px #808080; background: repeating-conic-gradient(#fff 0 25%, #dedbd5 0 50%) 0 0 / 2px 2px; }
    .tray { display: flex; align-items: center; gap: 3px; margin-left: auto; box-sizing: border-box; width: 97px; height: 21px; padding: 0 2px; border: 1px solid; border-color: #808080 #fff #fff #808080; }
    .tray time { margin: 0 auto; }
  `;

  private menuItem(before: string, key: string, after: string) {
    return html`<button>${before}<u>${key}</u>${after}</button>`;
  }

  private tri(d: string, color = "#000") {
    return html`<svg width="10" height="10" viewBox="0 0 10 10" aria-hidden="true"><path d=${d} fill=${color} /></svg>`;
  }

  private round(label: string, plus: boolean) {
    return html`<button class="round" aria-label=${label}><svg viewBox="0 0 11 11"><circle cx="5.500" cy="5.500" r="5" fill="#d7e8f5" stroke="#3f6f98" /><path d="M3 5.500h5" stroke="#1f4f7d" />${plus ? svg`<path d="M5.500 3v5" stroke="#1f4f7d"/>` : nothing}</svg></button>`;
  }

  render() {
    return html`
      <header class="title">
        ${glyph("writer")}
        <h1>Hibakódok_jelentése_BAXI_2015.doc - OpenOffice.org Writer</h1>
        <button class="raised" aria-label="Kis méret"><svg width="10" height="10"><path d="M1 8h6" stroke="#000" stroke-width="2" /></svg></button>
        <button class="raised" aria-label="Előző méret"><svg width="10" height="10"><path d="M3.500 3V1.500h5v4H7M3 1h6M1.500 4.500h5v4h-5zM1 4h6" fill="none" stroke="#000" /></svg></button>
        <button class="raised close" aria-label="Bezárás"><svg width="10" height="10"><path d="M1.500 1.500l7 7M8.500 1.500l-7 7" stroke="#000" stroke-width="1.500" /></svg></button>
      </header>
      <div class="chrome">
        <nav class="menu">
          ${this.menuItem("", "F", "ájl")}${this.menuItem("S", "z", "erkesztés")}${this.menuItem("", "N", "ézet")}${this.menuItem("", "B", "eszúrás")}${this.menuItem("F", "o", "rmátum")}${this.menuItem("", "T", "áblázat")}${this.menuItem("", "E", "szközök")}${this.menuItem("", "A", "blak")}${this.menuItem("", "S", "úgó")}
          <button class="shut" aria-label="Dokumentum bezárása"><svg width="9" height="9"><path d="M1 1l7 7M8 1L1 8" stroke="#6e7d88" stroke-width="2" /></svg></button>
        </nav>
        <div class="bar" role="toolbar">
          <i class="grip"></i>${tool("newDoc", "Új")}${drop("Új típus")}${tool("open", "Megnyitás")}${tool("save", "Mentés")}${tool("mail", "Küldés")}${sep}${tool("edit", "Szerkesztés", true)}<i class="gap8"></i>${tool("pdf", "PDF")}${tool("print", "Nyomtatás")}${tool("preview", "Nyomtatási kép")}${sep}${tool("spell", "Helyesírás")}<i class="gap2"></i>${tool("autoSpell", "Automatikus ellenőrzés", true)}${sep}${tool("cut", "Kivágás")}${tool("copy", "Másolás")}${tool("paste", "Beillesztés")}${drop("Beillesztés módja")}${tool("brush", "Formátumecset")}${sep}${tool("undo", "Visszavonás")}${drop("Visszavonások", true)}${tool("redo", "Ismét")}${drop("Ismétlések", true)}${sep}${tool("globe", "Hiperhivatkozás")}${tool("table", "Táblázat")}${drop("Táblázat mérete")}${tool("draw", "Rajz")}${sep}${tool("find", "Keresés")}${tool("nav", "Navigátor")}${tool("gallery", "Képtár")}${tool("sources", "Adatforrások")}${tool("pilcrow", "Nem nyomtatható karakterek")}${combo("Nagyítás", "w57", "100%")}<i class="gap9"></i>${tool("help", "Súgó")}<i class="gap6"></i><button class="more" aria-label="Továbbiak"></button>
        </div>
        <div class="bar" role="toolbar">
          <i class="grip"></i>${tool("styles", "Stílusok")}<i class="gap8"></i>${combo("Stílus", "w130", "Alapértelmezett")}<i class="gap8"></i>${combo("Betűtípus", "w145", "Times New Roman")}<i class="gap8"></i>${combo("Betűméret", "w57", "24")}<i class="gap9"></i>${tool("bold", "Félkövér", true)}${tool("italic", "Dőlt")}${tool("underline", "Aláhúzott")}${sep}${tool("left", "Balra")}${tool("center", "Középre", true)}${tool("right", "Jobbra")}${tool("justify", "Sorkizárt")}${sep}${tool("numbers", "Számozás")}${tool("bullets", "Felsorolás")}${tool("outdent", "Behúzás csökkentése")}${tool("indent", "Behúzás növelése")}${sep}${tool("fontColor", "Betűszín")}${drop("Betűszínek")}${tool("highlight", "Kiemelés")}${drop("Kiemelések")}${tool("background", "Háttér")}${drop("Hátterek")}<i class="gap6"></i><button class="more" aria-label="Továbbiak"></button>
        </div>
      </div>
      <main class="work">
        <div class="corner"><svg viewBox="0 0 16 16"><rect x=".500" y=".500" width="15" height="15" fill="#e4e1db" stroke="#808080" /><path d="M6 5v5h6" fill="none" stroke="#000" stroke-width="2" /></svg></div>
        <div class="ruler"><svg viewBox="0 0 793 17">${rulerDrawing()}</svg></div>
        <div class="vscroll">
          <button class="raised" aria-label="Fel">${this.tri("M1 7h8L5 3z")}</button><i></i>
          <div class="raised"></div><i></i>
          <button class="raised" aria-label="Le">${this.tri("M1 3h8L5 7z")}</button>
          <button class="raised" aria-label="Előző oldal">${this.tri("M2 5h7L5.500 1zM2 10h7L5.500 6z")}</button>
          <button class="raised" aria-label="Navigáció"><svg width="10" height="10"><circle cx="5" cy="5" r="4" fill="#7fb0d4" stroke="#2f5f88" /></svg></button>
          <button class="raised" aria-label="Következő oldal">${this.tri("M2 0h7L5.500 4zM2 5h7L5.500 9z")}</button>
        </div>
        <div class="vruler"></div>
        <div class="canvas"><doc-page></doc-page></div>
        <div class="hscroll">
          <button class="raised" aria-label="Balra">${this.tri("M7 1v8L3 5z", "#808080")}</button>
          <div class="raised"></div>
          <button class="raised" aria-label="Jobbra">${this.tri("M3 1v8l4-4z", "#808080")}</button>
        </div>
      </main>
      <section class="status">
        <div class="cell s1">Oldal 5 / 7</div><div class="cell s2">Alapértelmezett</div><div class="cell s3">Magyar</div><div class="cell s4">BESZÚR</div><div class="cell s5">Egyszeres</div><div class="cell s6"></div><div class="cell s7"></div><div class="cell s8"></div>
        <div class="cell s9"><svg viewBox="0 0 60 14"><path d="M2.500 1.500h6l2 2v9h-8z" fill="#b8dcf8" stroke="#2f6098" /><g fill="#e9eff5" stroke="#8d9eb0"><path d="M17.500 1.500h5l2 2v9h-8v-9zM27.500 1.500h5l2 2v9h-8v-9zM42.500 1.500h5v11h-7v-9zM48.500 1.500h5l2 2v9h-7z" /></g></svg></div>
        <div class="cell s10">${this.round("Kicsinyítés", false)}<input class="zoom" type="range" min="0" max="100" value="50" aria-label="Nagyítás" />${this.round("Nagyítás", true)}</div>
        <div class="cell s11">100%</div>
      </section>
      <footer class="task">
        <button class="raised start">${glyph("windows")}Start</button>
        <nav class="quick"><a href="#" aria-label="Asztal">${glyph("desktop")}</a><a href="#" aria-label="Chrome">${glyph("chrome")}</a><a href="#" aria-label="Firefox">${glyph("firefox")}</a></nav>
        <button class="chev">»</button>
        <button class="raised tab">${glyph("firefox")}Home - Dropbox - Mozilla...</button>
        <button class="raised tab current">${glyph("writer")}Hibakódok_jelentése...</button>
        <div class="tray">${glyph("speaker")}${glyph("orb")}${glyph("sound")}<time>7:34</time></div>
      </footer>
    `;
  }
}
